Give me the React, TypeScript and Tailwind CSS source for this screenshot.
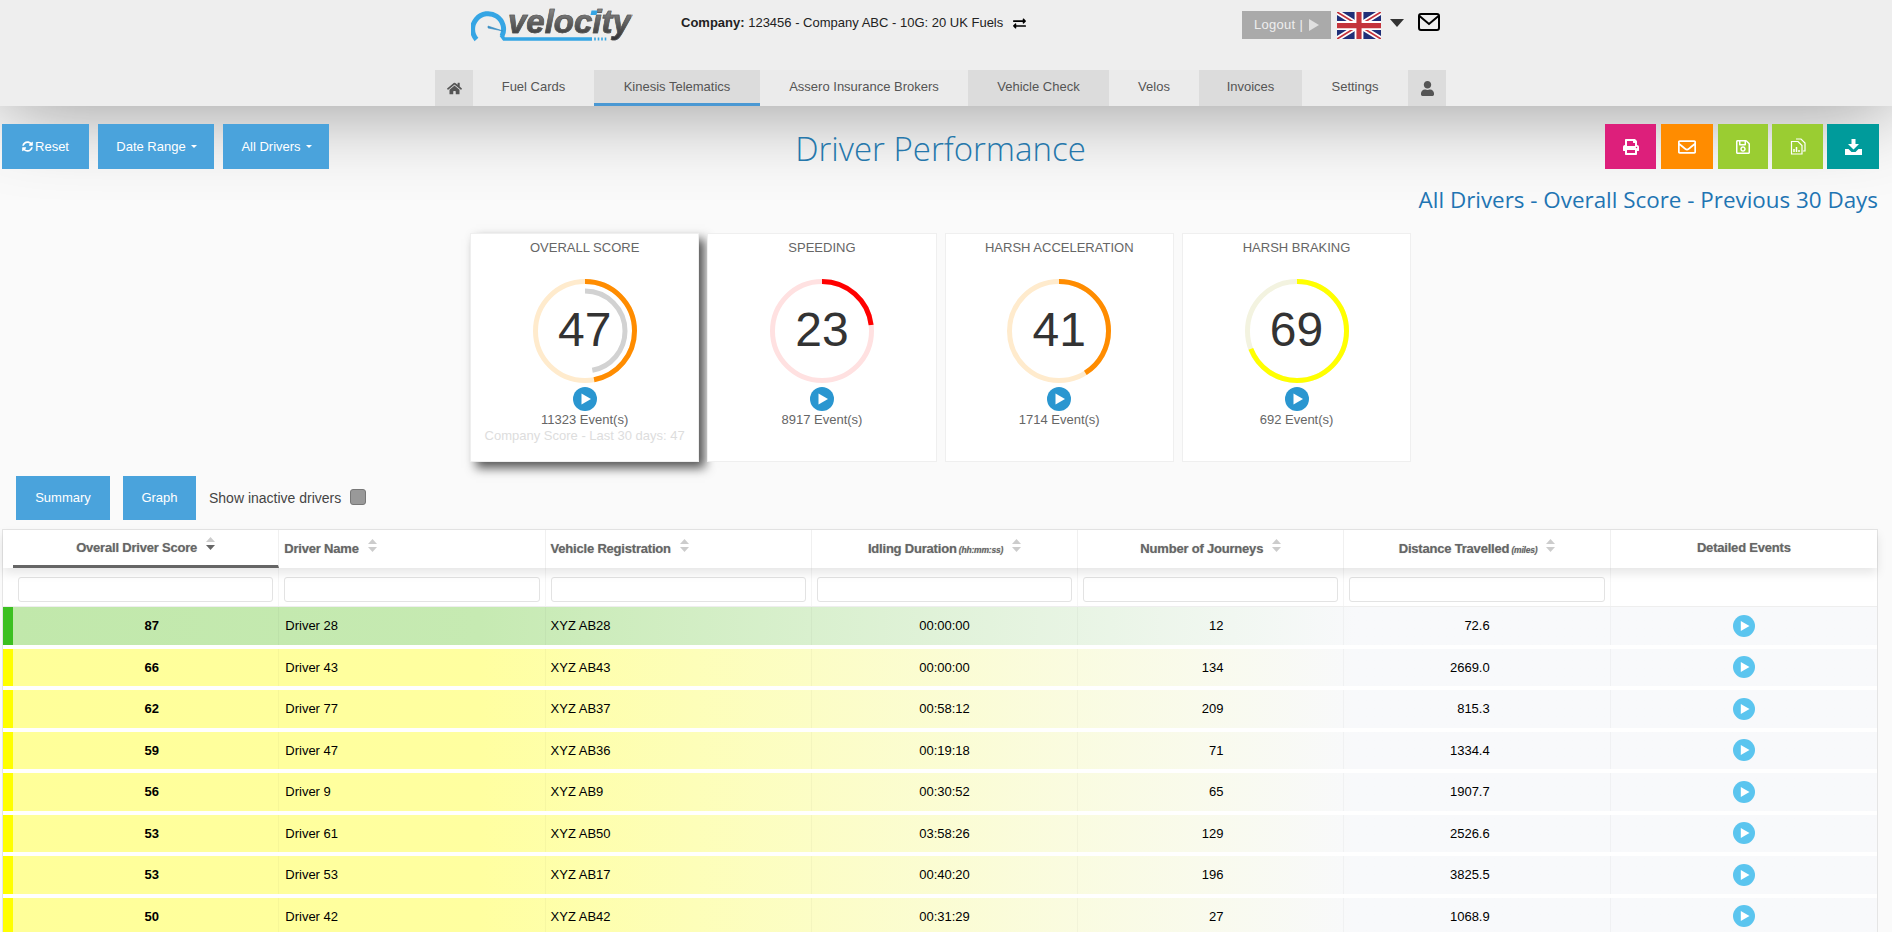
import { FaHome, FaUser, FaExchangeAlt, FaSyncAlt, FaPrint, FaRegEnvelope, FaRegSave } from "react-icons/fa";

const drivers = [
  { score: 87, name: "Driver 28", reg: "XYZ AB28", idle: "00:00:00", trips: 12, dist: "72.6", good: true },
  { score: 66, name: "Driver 43", reg: "XYZ AB43", idle: "00:00:00", trips: 134, dist: "2669.0" },
  { score: 62, name: "Driver 77", reg: "XYZ AB37", idle: "00:58:12", trips: 209, dist: "815.3" },
  { score: 59, name: "Driver 47", reg: "XYZ AB36", idle: "00:19:18", trips: 71, dist: "1334.4" },
  { score: 56, name: "Driver 9", reg: "XYZ AB9", idle: "00:30:52", trips: 65, dist: "1907.7" },
  { score: 53, name: "Driver 61", reg: "XYZ AB50", idle: "03:58:26", trips: 129, dist: "2526.6" },
  { score: 53, name: "Driver 53", reg: "XYZ AB17", idle: "00:40:20", trips: 196, dist: "3825.5" },
  { score: 50, name: "Driver 42", reg: "XYZ AB42", idle: "00:31:29", trips: 27, dist: "1068.9" },
];

const tabs = [
  { label: "Fuel Cards", w: "w-[121px]", bg: "bg-[#ebebeb]" },
  { label: "Kinesis Telematics", w: "w-[166px]", bg: "bg-[#dcdcdc]", active: true },
  { label: "Assero Insurance Brokers", w: "w-[208px]", bg: "bg-[#ebebeb]" },
  { label: "Vehicle Check", w: "w-[141px]", bg: "bg-[#dcdcdc]" },
  { label: "Velos", w: "w-[90px]", bg: "bg-[#ebebeb]" },
  { label: "Invoices", w: "w-[103px]", bg: "bg-[#dcdcdc]" },
  { label: "Settings", w: "w-[106px]", bg: "bg-[#ebebeb]" },
];

const Logo = () => (
  <div className="relative w-[160px] h-[34px]">
    <span className="absolute left-[37px] top-[-6px] text-[33px] leading-[38px] font-bold italic [-webkit-text-stroke:0.6px_#555] bg-gradient-to-b from-[#9a9a9a] to-[#2f2f2f] bg-clip-text text-transparent">
      velocity
    </span>
    <svg width="160" height="34" viewBox="0 0 160 34" className="absolute left-0 top-0">
      {/* gauge */}
      <path d="M5.5 30.5 A15.5 15.5 0 1 1 31 27" fill="none" stroke="#35a5e4" strokeWidth="5" />
      <path d="M30 26 L33 30 L121 30" fill="none" stroke="#35a5e4" strokeWidth="3.5" />
      <path d="M17 17 L32 22 L17 19 Z" fill="#3a8fc4" stroke="#3a8fc4" strokeWidth="0.6" />
      <path d="M124 28.5 v3 M127.5 28.5 v3 M131 28.5 v3 M134.5 28.5 v3" stroke="#35a5e4" strokeWidth="1.6" />
      {/* dot of the i */}
      <path d="M119.5 6 L120.5 1.5 H126.5 L125.5 6 Z" fill="#35a5e4" />
    </svg>
  </div>
);

const Flag = () => (
  <svg width="44" height="27" viewBox="0 0 60 36" preserveAspectRatio="none">
    <rect width="60" height="36" fill="#1f2f78" />
    <path d="M0 0 L60 36 M60 0 L0 36" stroke="#fff" strokeWidth="7" />
    <path d="M0 0 L60 36 M60 0 L0 36" stroke="#c4343c" strokeWidth="2.4" />
    <path d="M30 0 V36 M0 18 H60" stroke="#fff" strokeWidth="12" />
    <path d="M30 0 V36 M0 18 H60" stroke="#c4343c" strokeWidth="7" />
  </svg>
);

const Play = ({ size, color }: { size: number; color: string }) => (
  <svg width={size} height={size} viewBox="0 0 24 24" className="block">
    <circle cx="12" cy="12" r="12" fill={color} />
    <path d="M8.5 6.5 L18 12 L8.5 17.5 Z" fill="#fff" />
  </svg>
);

const Sort = ({ active }: { active?: boolean }) => (
  <svg width="9" height="13" viewBox="0 0 9 13" className="mb-[8px]">
    <path d="M4.5 0 L9 5 H0 Z" fill="#ccc" />
    <path d="M4.5 13 L9 8 H0 Z" fill={active ? "#666" : "#ccc"} />
  </svg>
);

const Ring = ({ value, color, track, inner }: { value: number; color: string; track: string; inner?: boolean }) => {
  const r = 49.5;
  const c = 2 * Math.PI * r;
  const ri = 40;
  const ci = 2 * Math.PI * ri;
  return (
    <div className="relative w-[110px] h-[110px] mx-auto">
      <svg width="110" height="110" viewBox="0 0 110 110" className="-rotate-90">
        <circle cx="55" cy="55" r={r} fill="none" stroke={track} strokeWidth="5" />
        <circle cx="55" cy="55" r={r} fill="none" stroke={color} strokeWidth="5" strokeDasharray={`${(c * value) / 100} ${c}`} />
        {inner && (
          <circle cx="55" cy="55" r={ri} fill="none" stroke="#d2d2d2" strokeWidth="5" strokeDasharray={`${(ci * value) / 100} ${ci}`} />
        )}
      </svg>
      <div className="absolute inset-0 flex items-center justify-center text-[48px] text-[#333] pb-[2px]">{value}</div>
    </div>
  );
};

const Card = ({ title, value, color, track, events, overall }: { title: string; value: number; color: string; track: string; events: string; overall?: boolean }) => (
  <div className={`w-[229.3px] h-[229px] border border-[#efefef] bg-white text-center text-[13px] text-[#666] ${overall ? "shadow-[6px_6px_10px_#555]" : ""}`}>
    <div className="pt-[5px] leading-[18px] h-[42px]">{title}</div>
    <Ring value={value} color={color} track={track} inner={overall} />
    <div className="flex justify-center mt-[1px]">
      <Play size={24} color="#2a96d0" />
    </div>
    <div className="leading-[16px] mt-[1px]">{events}</div>
    {overall && <div className="leading-[16px] text-[#ddd]">Company Score - Last 30 days: 47</div>}
  </div>
);

const Head = ({ label, unit, active }: { label: string; unit?: string; active?: boolean }) => (
  <div className="flex items-center justify-center gap-[9px] h-full">
    <span className="whitespace-nowrap">
      {label}
      {unit && <span className="text-[8.5px] italic"> {unit}</span>}
    </span>
    <Sort active={active} />
  </div>
);

export default function App() {
  return (
    <div className="h-[932px] overflow-hidden bg-[#fafafa] font-['Liberation_Sans',sans-serif] text-[13px]">
      {/* Header */}
      <header className="h-[106px] bg-[#eeeeee] shadow-[0_0_85px_rgba(0,0,0,0.43)] flex flex-col">
        <div className="h-[70px] flex items-start">
          <div className="ml-[471px] mt-[9px]">
            <Logo />
          </div>
          <div className="ml-[50px] mt-[14px] leading-[18px] text-[#222] whitespace-nowrap flex items-center gap-[10px]">
            <span>
              <b>Company:</b> 123456 - Company ABC - 10G: 20 UK Fuels
            </span>
            <FaExchangeAlt className="w-[13px] h-[13px] text-black" />
          </div>
          <div className="ml-auto mr-[452px] mt-[11px] flex items-start">
            <div className="w-[89px] h-[28px] bg-[#aaaaaa] text-[#eee] tracking-[0.3px] flex items-center justify-center gap-[6px]">
              Logout | <span className="w-0 h-0 border-y-[6px] border-y-transparent border-l-[10px] border-l-[#dfdfdf]" />
            </div>
            <div className="ml-[6px] mt-[1px]">
              <Flag />
            </div>
            <span className="ml-[9px] mt-[8px] w-0 h-0 border-x-[7px] border-x-transparent border-t-[8px] border-t-[#333]" />
            <svg width="22" height="18" viewBox="0 0 22 18" className="ml-[14px] mt-[2px]">
              <rect x="1" y="1" width="20" height="16" rx="2" fill="none" stroke="#000" strokeWidth="2" />
              <path d="M1.5 3 L11 11 L20.5 3" fill="none" stroke="#000" strokeWidth="2" />
            </svg>
          </div>
        </div>
        <nav className="ml-[435px] h-[36px] flex text-[#555]">
          <div className="w-[38px] bg-[#dcdcdc] flex items-center justify-center">
            <FaHome className="w-[15px] h-[15px] text-[#555]" />
          </div>
          {tabs.map((t) => (
            <div key={t.label} className={`${t.w} ${t.bg} flex items-center justify-center pb-[2px] ${t.active ? "border-b-[3px] border-[#4a98d3] pt-[3px]" : ""}`}>
              {t.label}
            </div>
          ))}
          <div className="w-[38px] bg-[#dcdcdc] flex items-center justify-center">
            <FaUser className="w-[13px] h-[17px] text-[#555]" />
          </div>
        </nav>
      </header>

      {/* Toolbar */}
      <div className="mt-[18px] pl-[2px] pr-[13px] grid grid-cols-[1fr_auto_1fr] items-center">
        <div className="flex gap-[9px] text-white">
          <button className="w-[87px] h-[45px] bg-[#4aa3dc] flex items-center justify-center gap-[2px]">
            <FaSyncAlt className="w-[11px] h-[11px]" /> Reset
          </button>
          <button className="w-[116px] h-[45px] pl-[1px] bg-[#4aa3dc] flex items-center justify-center gap-[5px]">
            Date Range <span className="w-0 h-0 border-x-[3px] border-x-transparent border-t-[3px] border-t-white" />
          </button>
          <button className="w-[106px] h-[45px] pl-[1px] bg-[#4aa3dc] flex items-center justify-center gap-[5px]">
            All Drivers <span className="w-0 h-0 border-x-[3px] border-x-transparent border-t-[3px] border-t-white" />
          </button>
        </div>
        <h1 className="font-['Open_Sans',sans-serif] font-light text-[33px] h-[45px] leading-[49px] text-[#2577ab]">Driver Performance</h1>
        <div className="flex justify-end text-white">
          <button className="w-[51px] h-[45px] bg-[#dd1f7b] flex items-center justify-center"><FaPrint className="w-[16px] h-[16px]" /></button>
          <button className="ml-[5px] w-[52px] h-[45px] bg-[#ff8c00] flex items-center justify-center"><FaRegEnvelope className="w-[18px] h-[18px]" /></button>
          <button className="ml-[5px] w-[50px] h-[45px] bg-[#9acd32] flex items-center justify-center"><FaRegSave className="w-[16px] h-[16px]" /></button>
          <button className="ml-[4px] w-[51px] h-[45px] bg-[#9acd32] flex items-center justify-center">
            <svg width="16" height="17" viewBox="0 0 16 17" fill="none" stroke="#fff" strokeWidth="1.2">
              <path d="M6 1 H11 L15 5 V13 H13" />
              <path d="M1.5 3.5 H8 L12 7.5 V16 H1.5 Z" />
              <path d="M4 14 V11 M6.5 14 V9 M9 14 V12" strokeWidth="1.5" />
            </svg>
          </button>
          <button className="ml-[4px] w-[52px] h-[45px] bg-[#009b9b] flex items-center justify-center">
            <svg width="17" height="16" viewBox="0 0 17 16" fill="#fff">
              <path d="M6.5 0 H10.5 V5 H14 L8.5 10.5 L3 5 H6.5 Z" />
              <path d="M0 10 H3.5 L6.5 13 H10.5 L13.5 10 H17 V16 H0 Z" />
            </svg>
          </button>
        </div>
      </div>

      <div className="mt-[17px] h-[28px] pr-[14px] text-right font-['Open_Sans',sans-serif] text-[22.4px] leading-[28px] text-[#1f75b3]">
        All Drivers - Overall Score - Previous 30 Days
      </div>

      {/* Score cards */}
      <div className="mt-[19px] ml-[470px] flex gap-[8px]">
        <Card title="OVERALL SCORE" value={47} color="#ff8c00" track="#ffebcd" events="11323 Event(s)" overall />
        <Card title="SPEEDING" value={23} color="#ff0000" track="#ffe1e1" events="8917 Event(s)" />
        <Card title="HARSH ACCELERATION" value={41} color="#ff8c00" track="#ffebcd" events="1714 Event(s)" />
        <Card title="HARSH BRAKING" value={69} color="#ffff00" track="#f3f3e0" events="692 Event(s)" />
      </div>

      {/* Summary / Graph */}
      <div className="mt-[14px] ml-[16px] h-[44px] flex items-center text-[#444]">
        <button className="w-[94px] h-[44px] bg-[#4aa3dc] text-white">Summary</button>
        <button className="ml-[13px] w-[73px] h-[44px] bg-[#4aa3dc] text-white">Graph</button>
        <span className="ml-[13px] text-[14px]">Show inactive drivers</span>
        <span className="ml-[9px] mb-[2px] w-[16px] h-[16px] rounded-[3px] bg-[#999] border border-[#777]" />
      </div>

      {/* Table */}
      <div className="mt-[9px] ml-[2px] w-[1876px] border border-[#e5e5e5]">
        <div className="relative pl-[10px] h-[38px] bg-white grid grid-cols-7 font-bold text-[#666] tracking-[-0.2px] [text-shadow:0_0_1px_rgba(0,0,0,0.3)] shadow-[0_5px_10px_rgba(0,0,0,0.1)]">
          <div className="border-b-[3px] border-[#666] border-r border-r-[#f0f0f0]"><Head label="Overall Driver Score" active /></div>
          <div className="border-r border-[#f0f0f0] pl-[5px] flex items-center gap-[9px]"><span>Driver Name</span><Sort /></div>
          <div className="border-r border-[#f0f0f0] pl-[5px] flex items-center gap-[9px]"><span>Vehicle Registration</span><Sort /></div>
          <div className="border-r border-[#f0f0f0]"><Head label="Idling Duration" unit="(hh:mm:ss)" /></div>
          <div className="border-r border-[#f0f0f0]"><Head label="Number of Journeys" /></div>
          <div className="border-r border-[#f0f0f0]"><Head label="Distance Travelled" unit="(miles)" /></div>
          <div className="flex justify-center pt-[10px] leading-[16px]">Detailed Events</div>
        </div>
        <div className="pl-[10px] h-[39px] bg-white grid grid-cols-7 border-b border-[#eee]">
          {[0, 1, 2, 3, 4, 5].map((i) => (
            <div key={i} className="px-[5px] pt-[8.5px] border-r border-[#f5f5f5]">
              <input className="block w-full h-[25px] bg-white border border-[#e3e3e3] rounded-[3px]" />
            </div>
          ))}
          <div />
        </div>
        <div className="flex flex-col gap-[4px] bg-white text-black">
          {drivers.map((d) => (
            <div key={d.name} className="flex h-[37.5px]">
              <div className={`w-[10px] shrink-0 ${d.good ? "bg-[#3cc021]" : "bg-[#ffff00]"}`} />
              <div className={`flex-1 grid grid-cols-7 items-stretch h-full bg-gradient-to-r to-[#f8f9fb] to-[72%] ${d.good ? "from-[#c1e8ab] via-[#c6eab2] via-[25%]" : "from-[#ffff99] via-[#ffffa0] via-[25%]"}`}>
                <div className="pl-[12px] flex items-center justify-center font-bold border-r border-black/[0.03]">{d.score}</div>
                <div className="pl-[6px] flex items-center border-r border-black/[0.03]">{d.name}</div>
                <div className="pl-[5px] flex items-center border-r border-black/[0.03]">{d.reg}</div>
                <div className="flex items-center justify-center border-r border-black/[0.03]">{d.idle}</div>
                <div className="pr-[120px] flex items-center justify-end border-r border-black/[0.03]">{d.trips}</div>
                <div className="pr-[120px] flex items-center justify-end border-r border-black/[0.03]">{d.dist}</div>
                <div className="flex items-center justify-center"><Play size={22} color="#5bc5ef" /></div>
              </div>
            </div>
          ))}
        </div>
      </div>
    </div>
  );
}
